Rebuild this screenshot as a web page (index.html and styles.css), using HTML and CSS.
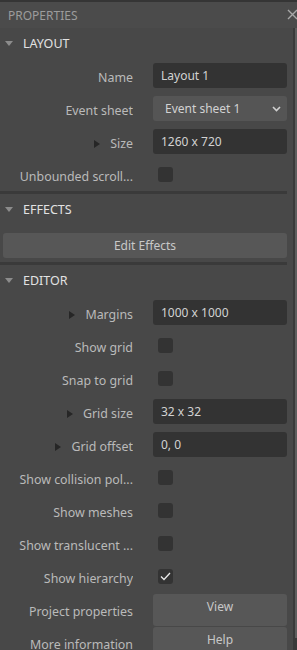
FILE: index.html
```html
<!DOCTYPE html>
<html lang="en">
<head>
    <meta charset="UTF-8">
    <meta name="viewport" content="width=device-width, initial-scale=1.0">
    <title>Properties</title>
    <link rel="stylesheet" href="styles.css">
</head>
<body>
    <div class="panel">
        <div class="titlebar">
            <span class="title">PROPERTIES</span>
            <svg class="close" width="11" height="11" viewBox="0 0 11 11"><path d="M1 1L10 10M10 1L1 10" stroke="#a8a8a8" stroke-width="1.4" fill="none"/></svg>
        </div>
        <div class="body">
            <div class="content">
                <div class="group-head"><span class="tri-down"></span>LAYOUT</div>
                <div class="row">
                    <span class="label">Name</span>
                    <div class="field">Layout 1</div>
                </div>
                <div class="row">
                    <span class="label">Event sheet</span>
                    <div class="select">Event sheet 1
                        <svg class="chev" width="9" height="6" viewBox="0 0 9 6"><path d="M1 1L4.5 4.5L8 1" stroke="#d0d0d0" stroke-width="1.6" fill="none"/></svg>
                    </div>
                </div>
                <div class="row">
                    <span class="label"><span class="tri-right"></span>Size</span>
                    <div class="field">1260 x 720</div>
                </div>
                <div class="row">
                    <span class="label">Unbounded scroll...</span>
                    <span class="check"></span>
                </div>

                <div class="sep"></div>
                <div class="group-head"><span class="tri-down"></span>EFFECTS</div>
                <div class="wide-btn">Edit Effects</div>

                <div class="sep"></div>
                <div class="group-head"><span class="tri-down"></span>EDITOR</div>
                <div class="row">
                    <span class="label"><span class="tri-right"></span>Margins</span>
                    <div class="field">1000 x 1000</div>
                </div>
                <div class="row">
                    <span class="label">Show grid</span>
                    <span class="check"></span>
                </div>
                <div class="row">
                    <span class="label">Snap to grid</span>
                    <span class="check"></span>
                </div>
                <div class="row">
                    <span class="label"><span class="tri-right"></span>Grid size</span>
                    <div class="field">32 x 32</div>
                </div>
                <div class="row">
                    <span class="label"><span class="tri-right"></span>Grid offset</span>
                    <div class="field">0, 0</div>
                </div>
                <div class="row">
                    <span class="label">Show collision pol...</span>
                    <span class="check"></span>
                </div>
                <div class="row">
                    <span class="label">Show meshes</span>
                    <span class="check"></span>
                </div>
                <div class="row">
                    <span class="label">Show translucent ...</span>
                    <span class="check"></span>
                </div>
                <div class="row">
                    <span class="label">Show hierarchy</span>
                    <span class="check">
                        <svg width="15" height="15" viewBox="0 0 15 15"><path d="M3 7.5L6 10.5L12 4" stroke="#e8e8e8" stroke-width="1.3" fill="none"/></svg>
                    </span>
                </div>
                <div class="row">
                    <span class="label">Project properties</span>
                    <div class="btn">View</div>
                </div>
                <div class="row">
                    <span class="label">More information</span>
                    <div class="btn">Help</div>
                </div>
            </div>
            <div class="scrollbar"><div class="thumb"></div></div>
        </div>
    </div>
</body>
</html>
```

FILE: styles.css
```css
body {
    margin: 0;
    background: #484848;
    font-family: "Noto Sans", "Open Sans", sans-serif;
    font-size: 12px;
    overflow: hidden;
}

.panel {
    width: 297px;
    height: 650px;
    overflow: hidden;
}

.titlebar {
    height: 26px;
    border-top: 2px solid #353535;
    background: #4b4b4b;
    display: flex;
    align-items: center;
    justify-content: space-between;
    padding-left: 8px;
}
.title {
    color: #9c9c9c;
    font-size: 12px;
}
.close {
    margin-right: -1px;
    margin-top: -2px;
}

.body {
    display: flex;
    height: 622px;
}
.content {
    flex: 1;
    padding-right: 6px;
}
.scrollbar {
    width: 4px;
    background: #3a3a3a;
    display: flex;
    justify-content: flex-end;
}
.thumb {
    width: 2px;
    height: 610px;
    background: #5e5e5e;
}

.group-head {
    height: 31px;
    display: flex;
    align-items: center;
    color: #e2e2e2;
    font-size: 12.5px;
    padding-left: 5px;
}
.tri-down {
    width: 0;
    height: 0;
    border-left: 4px solid transparent;
    border-right: 4px solid transparent;
    border-top: 5px solid #8c8c8c;
    margin-right: 10px;
}
.tri-right {
    display: inline-block;
    width: 0;
    height: 0;
    border-top: 4px solid transparent;
    border-bottom: 4px solid transparent;
    border-left: 6px solid #262626;
    margin-right: 10px;
    vertical-align: 0;
}

.row {
    height: 33px;
    display: grid;
    grid-template-columns: 133px 1fr;
    column-gap: 20px;
    align-items: center;
}
.label {
    text-align: right;
    color: #bababa;
    font-size: 12.4px;
    white-space: nowrap;
    overflow: hidden;
    margin-top: 4px;
}

.field, .select {
    height: 25px;
    border-radius: 3px;
    background: #333333;
    color: #d2d2d2;
    display: flex;
    align-items: center;
    padding-left: 8px;
    box-sizing: border-box;
}
.select {
    background: #555555;
    padding-left: 12px;
    justify-content: space-between;
    padding-right: 6px;
}

.check {
    width: 15px;
    height: 15px;
    margin-left: 5px;
    border-radius: 3px;
    background: #333333;
    display: block;
}
.check svg {
    display: block;
}

.wide-btn {
    margin: 8px 0 4px 3px;
    height: 25px;
    border-radius: 3px;
    background: #575757;
    color: #c8c8c8;
    display: flex;
    align-items: center;
    justify-content: center;
}

.btn {
    height: 32px;
    border-radius: 3px;
    background: #575757;
    color: #c8c8c8;
    text-align: center;
    box-sizing: border-box;
    padding-top: 4px;
}

.sep {
    height: 3px;
    background: #3a3a3a;
}
```
